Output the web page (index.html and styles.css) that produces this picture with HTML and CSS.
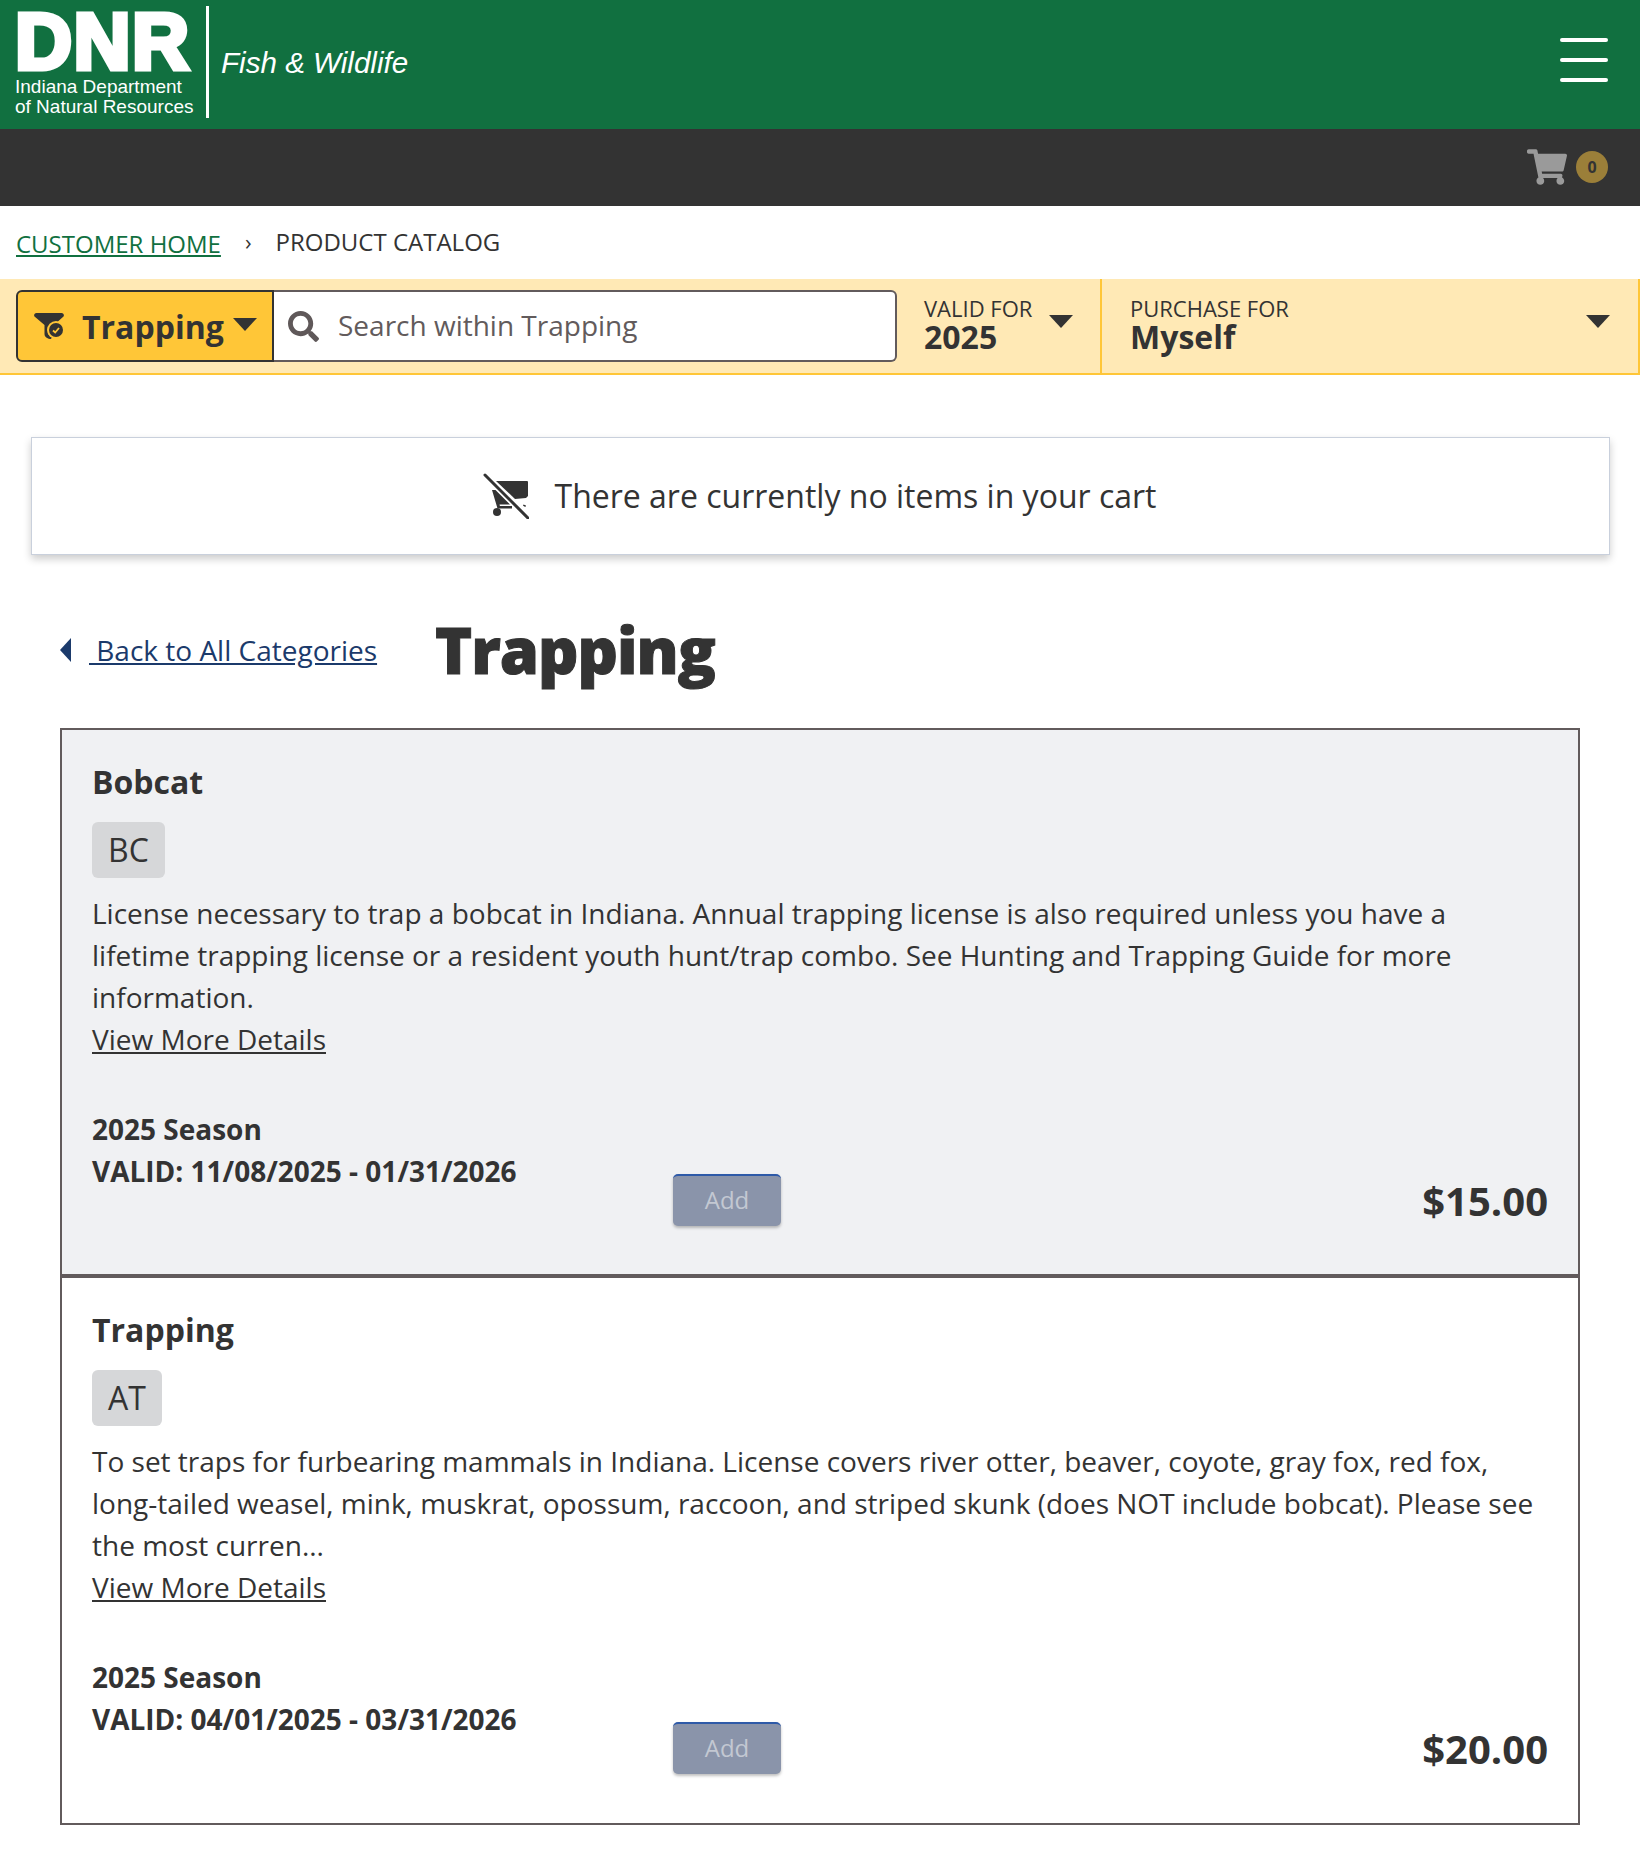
FILE: index.html
```html
<!DOCTYPE html>
<html lang="en">
<head>
<meta charset="utf-8">
<title>Product Catalog</title>
<link rel="stylesheet" href="styles.css">
</head>
<body>
<header class="top">
  <div class="brand">
    <div class="logo">
      <div class="logo-mark">DNR</div>
      <div class="logo-sub">Indiana Department<br>of Natural Resources</div>
    </div>
    <div class="division">Fish &amp; Wildlife</div>
  </div>
  <button class="burger" aria-label="Menu"><span></span><span></span><span></span></button>
</header>
<div class="cartbar">
  <svg class="cart-icon" viewBox="0 0 576 512"><path fill="#9a9a9a" d="M528.12 301.319l47.273-208C578.806 78.301 567.391 64 551.99 64H159.208l-9.166-44.81C147.758 8.021 137.93 0 126.529 0H24C10.745 0 0 10.745 0 24v16c0 13.255 10.745 24 24 24h69.883l70.248 343.435C147.325 417.1 136 435.222 136 456c0 30.928 25.072 56 56 56s56-25.072 56-56c0-15.674-6.447-29.835-16.824-40h209.647C430.447 426.165 424 440.326 424 456c0 30.928 25.072 56 56 56s56-25.072 56-56c0-22.172-12.888-41.332-31.579-50.405l5.517-24.276c3.413-15.018-8.002-29.319-23.403-29.319H218.117l-6.545-32h293.145c11.206 0 20.92-7.754 23.403-18.681z"/></svg>
  <span class="cart-count">0</span>
</div>
<nav class="crumbs">
  <a href="#" class="crumb-link">CUSTOMER HOME</a>
  <span class="crumb-sep">›</span>
  <span class="crumb-cur">PRODUCT CATALOG</span>
</nav>
<div class="filterbar">
  <div class="searchgroup">
    <button class="cat-btn">
      <svg class="cat-icon" viewBox="0 0 32 26"><path fill="#333" d="M2.500 0h25c2 0 3 2 2 3.500L20 12l-6 6v2c0 2 1.500 2.500 3 3l1 1-1 2c-3 0-6.500-1.500-6.500-5v-9L.500 3.500C-.500 2 .500 0 2.500 0z"/><circle cx="22" cy="17" r="9" fill="#ffc637"/><circle cx="22" cy="17" r="7" fill="#333"/><path fill="none" stroke="#ffc637" stroke-width="1.800" d="M19 17.500l2.200 2 3.800-4.500"/></svg>
      <span>Trapping</span>
      <i class="caret"></i>
    </button>
    <div class="search">
      <svg class="search-icon" viewBox="0 0 512 512"><path fill="#5f5859" d="M505 442.7L405.3 343c-4.500-4.500-10.600-7-17-7H372c27.600-35.300 44-79.700 44-128C416 93.100 322.900 0 208 0S0 93.100 0 208s93.100 208 208 208c48.300 0 92.700-16.400 128-44v16.300c0 6.400 2.500 12.500 7 17l99.700 99.700c9.400 9.400 24.600 9.400 33.900 0l28.300-28.300c9.400-9.400 9.400-24.600.1-34zM208 336c-70.700 0-128-57.200-128-128 0-70.700 57.200-128 128-128 70.700 0 128 57.200 128 128 0 70.700-57.200 128-128 128z"/></svg>
      <span class="placeholder">Search within Trapping</span>
    </div>
  </div>
  <div class="picker picker-year">
    <div class="picker-text"><div class="picker-label">VALID FOR</div><div class="picker-value">2025</div></div>
    <i class="caret"></i>
  </div>
  <div class="picker picker-for">
    <div class="picker-text"><div class="picker-label">PURCHASE FOR</div><div class="picker-value">Myself</div></div>
    <i class="caret"></i>
  </div>
</div>
<main class="content">
  <div class="notice">
    <svg class="empty-cart" viewBox="0 0 46 46"><path fill="#333" d="M13 8h31a1 1 0 0 1 1 1v14l-2 2-11 1z"/><path fill="#333" d="M9 17h3.500L27 31.500H16.500l.4 1.500H29v2.500H14.500z"/><circle cx="14" cy="39" r="4" fill="#333"/><path fill="#333" d="M40.500 31.500l2.500 1-.6 1.500-2.400-1.200z"/><path stroke="#333" stroke-width="3" stroke-linecap="round" d="M2 2l43 43" fill="none"/></svg>
    <span>There are currently no items in your cart</span>
  </div>
  <div class="titlerow">
    <div class="back"><i class="back-tri"></i><a href="#" class="back-link">&nbsp;Back to All Categories</a></div>
    <h1>Trapping</h1>
  </div>
  <section class="list">
    <article class="card card-alt">
      <h2>Bobcat</h2>
      <div class="code">BC</div>
      <p>License necessary to trap a bobcat in Indiana. Annual trapping license is also required unless you have a lifetime trapping license or a resident youth hunt/trap combo. See Hunting and Trapping Guide for more information.</p>
      <a href="#" class="more">View More Details</a>
      <div class="foot">
        <div class="season">2025 Season<br>VALID: 11/08/2025 - 01/31/2026</div>
        <button class="add" disabled>Add</button>
        <div class="price">$15.00</div>
      </div>
    </article>
    <article class="card">
      <h2>Trapping</h2>
      <div class="code">AT</div>
      <p>To set traps for furbearing mammals in Indiana. License covers river otter, beaver, coyote, gray fox, red fox, long-tailed weasel, mink, muskrat, opossum, raccoon, and striped skunk (does NOT include bobcat). Please see the most curren...</p>
      <a href="#" class="more">View More Details</a>
      <div class="foot">
        <div class="season">2025 Season<br>VALID: 04/01/2025 - 03/31/2026</div>
        <button class="add" disabled>Add</button>
        <div class="price">$20.00</div>
      </div>
    </article>
  </section>
</main>
</body>
</html>
```
FILE: styles.css
```css
* { box-sizing: border-box; }
html, body { margin: 0; padding: 0; background: #fff; }
body { font-family: "Open Sans", "Liberation Sans", sans-serif; color: #333; }

.top { height: 129px; background: #117040; display: flex; justify-content: space-between; align-items: flex-start; padding: 0 32px 0 15px; }
.brand { display: flex; align-items: stretch; height: 112px; margin-top: 6px; }
.logo { width: 177px; font-family: "Liberation Sans", Arial, sans-serif; color: #fff; }
.logo-mark { font-size: 79px; font-weight: 700; line-height: 60px; height: 69px; padding-top: 6px; letter-spacing: 1.500px; -webkit-text-stroke: 5px #fff; white-space: nowrap; }
.logo-sub { font-size: 19px; line-height: 20px; margin-top: 2px; white-space: nowrap; }
.division { margin-left: 14px; padding: 39px 0 0 12px; border-left: 3px solid #fff; font-family: "Liberation Sans", Arial, sans-serif; font-style: italic; color: #fff; font-size: 29.600px; line-height: 36px; white-space: nowrap; }
.burger { margin-top: 38px; width: 48px; height: 44px; padding: 0; border: 0; background: none; display: flex; flex-direction: column; justify-content: space-between; }
.burger span { display: block; height: 4px; border-radius: 2px; background: #fff; }

.cartbar { height: 77px; background: #333; display: flex; align-items: center; justify-content: flex-end; padding: 0 32px 2px 0; gap: 9px; }
.cart-icon { width: 40px; height: 36px; }
.cart-count { width: 32px; height: 32px; border-radius: 50%; background: #9b7f39; color: #333; font-size: 16px; font-weight: 700; line-height: 32px; text-align: center; }

.crumbs { height: 73px; display: flex; align-items: center; padding: 0 16px; font-size: 24px; }
.crumb-link { color: #117040; text-decoration: underline; margin-top: 2px; }
.crumb-sep { margin: -4px 24px 0 24px; color: #333; font-size: 22px; }
.crumb-cur { margin-top: -2px; }

.filterbar { height: 96px; background: #ffe9b5; border-bottom: 2px solid #ffc637; border-right: 2px solid #ffc637; display: flex; align-items: stretch; padding-left: 16px; }
.searchgroup { display: flex; width: 881px; height: 72px; margin-top: 11px; }
.cat-btn { width: 258px; border: 2px solid #333; border-radius: 6px 0 0 6px; background: #ffc637; display: flex; align-items: center; padding: 0 16px; font-family: inherit; font-size: 32px; font-weight: 700; color: #333; }
.cat-icon { width: 32px; height: 26px; margin-right: 16px; flex: none; }
.caret { display: block; width: 0; height: 0; border-left: 12px solid transparent; border-right: 12px solid transparent; border-top: 13px solid #333; flex: none; }
.cat-btn .caret { margin: -4px 0 0 9px; }
.search { flex: 1; display: flex; align-items: center; background: #fff; border: 2px solid #625b5c; border-left: 0; border-radius: 0 6px 6px 0; padding-left: 14px; }
.search-icon { width: 31px; height: 31px; margin-right: 19px; }
.placeholder { font-size: 28px; color: #625b5c; margin-top: -2px; }
.picker { display: flex; align-items: center; justify-content: space-between; padding: 0 27px 2px; }
.picker-year { width: 205px; padding-right: 27px; border-right: 2px solid #ffc637; }
.picker-for { flex: 1; padding-left: 28px; padding-right: 28px; }
.picker-label { font-size: 22px; line-height: 24px; }
.picker-value { font-size: 32px; line-height: 34px; font-weight: 700; }
.picker .caret { margin-top: -8px; }

.content { padding: 62px 30px 0 31px; }
.notice { height: 118px; border: 1px solid #c9d0dc; box-shadow: 0 4px 8px rgba(0,0,0,.2); display: flex; align-items: center; justify-content: center; gap: 26px; font-size: 32px; padding-right: 2px; }
.notice span { margin-top: -2px; }
.empty-cart { width: 46px; height: 46px; }
.titlerow { display: flex; align-items: center; height: 118px; margin-top: 36px; padding-left: 29px; }
.back { width: 375px; display: flex; align-items: center; font-size: 28px; }
.back-tri { width: 0; height: 0; border-top: 12px solid transparent; border-bottom: 12px solid transparent; border-right: 11px solid #1b3a6b; margin-right: 18px; }
.back-link { color: #1b3a6b; text-decoration: underline; }
h1 { margin: 0; font-size: 63px; font-weight: 800; line-height: 80px; letter-spacing: -1px; -webkit-text-stroke: 1px #333; }
.list { margin: 19px 0 0 29px; width: 1520px; }
.card { border: 2px solid #625b5c; height: 550px; padding: 30px 30px 0; }
.card-alt { background: #f0f1f3; border-bottom-width: 4px; }
.card + .card { border-top: 0; height: 547px; padding-top: 30px; }
h2 { margin: 0; font-size: 32px; font-weight: 700; line-height: 44px; }
.code { display: inline-block; margin-top: 18px; height: 56px; padding: 0 16px; border-radius: 6px; background: #d6d7d9; font-size: 32px; line-height: 56px; }
p { margin: 14px 0 0; font-size: 28px; line-height: 42px; }
.more { font-size: 28px; line-height: 42px; color: #333; text-decoration: underline; display: inline-block; }
.foot { display: grid; grid-template-columns: 581px auto 1fr; margin-top: 48px; align-items: start; }
.season { font-size: 28px; line-height: 42px; font-weight: 700; white-space: nowrap; }
.add { width: 108px; height: 52px; margin-top: 66px; padding: 0 0 3px; border: 0; border-top: 2px solid #2e5aa8; border-radius: 5px; background: #8a94aa; box-shadow: 0 2px 3px rgba(0,0,0,.25); color: #c3c8d2; font-family: inherit; font-size: 24px; }
.price { text-align: right; font-size: 40px; font-weight: 700; line-height: 54px; margin-top: 66px; }
```
